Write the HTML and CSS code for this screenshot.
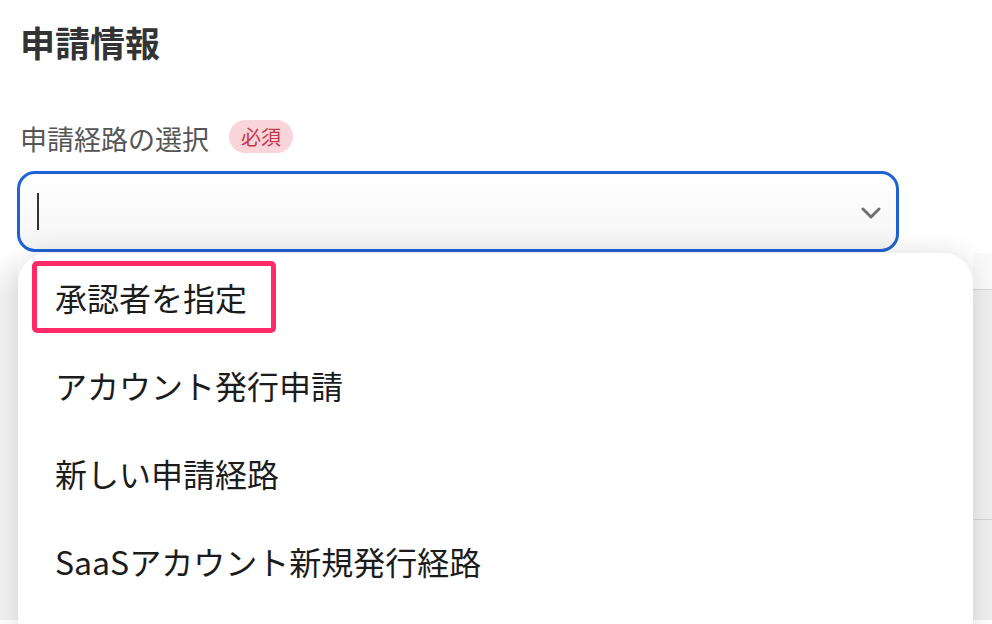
FILE: index.html
```html
<!DOCTYPE html>
<html lang="ja">
<head>
<meta charset="utf-8">
<link rel="stylesheet" href="styles.css">
</head>
<body>
<div class="page">
  <h1 class="title">申請情報</h1>
  <div class="field-label"><span>申請経路の選択</span><span class="badge">必須</span></div>
  <div class="select">
    <span class="caret"></span>
    <svg class="chevron" width="20" height="12" viewBox="0 0 20 12"><path d="M2 2 L10 10 L18 2" fill="none" stroke="#707070" stroke-width="3" stroke-linecap="round" stroke-linejoin="round"/></svg>
  </div>
  <div class="backdrop">
    <div class="bg-left"></div>
    <div class="bg-right">
      <div class="bg-row first"></div>
      <div class="bg-row second"></div>
      <div class="bg-row rest"></div>
    </div>
    <ul class="menu">
      <li class="item"><span class="mark">承認者を指定</span></li>
      <li class="item"><span>アカウント発行申請</span></li>
      <li class="item"><span>新しい申請経路</span></li>
      <li class="item"><span>SaaSアカウント新規発行経路</span></li>
    </ul>
  </div>
</div>
</body>
</html>
```

FILE: styles.css
```css
* { box-sizing: border-box; }
html, body { margin: 0; padding: 0; background: #fff; }
body {
  width: 992px;
  height: 624px;
  overflow: hidden;
  font-family: "Noto Sans CJK JP", "Noto Sans", sans-serif;
}
.page { display: flex; flex-direction: column; }
.title {
  margin: 0;
  padding: 20px 0 0 20px;
  font-size: 35px;
  line-height: 44px;
  font-weight: 700;
  color: #333;
}
.field-label {
  margin-top: 54px;
  padding-left: 20px;
  display: flex;
  align-items: center;
  height: 40px;
  font-size: 27px;
  color: #555;
}
.badge {
  margin-left: 20px;
  height: 33px;
  padding: 0 12px;
  border-radius: 17px;
  background: #f9d4d9;
  color: #c2384e;
  font-size: 20px;
  line-height: 33px;
  margin-top: -3px;
}
.select {
  margin: 13px 0 0 17px;
  width: 882px;
  height: 81px;
  border: 3px solid #1f62d4;
  border-radius: 18px;
  background: linear-gradient(#fff, #f5f5f5);
  display: flex;
  align-items: center;
  justify-content: space-between;
  padding: 0 15px 0 17px;
}
.caret {
  width: 2px;
  height: 37px;
  background: #333;
}
.chevron { margin-top: 2px; }
.backdrop {
  position: relative;
  height: 367px;
  margin-top: 1px;
  display: flex;
  justify-content: space-between;
}
.bg-left {
  width: 18px;
  background: linear-gradient(to bottom, #fff 0, #f1f1f1 40px);
}
.bg-right {
  width: 19px;
  display: flex;
  flex-direction: column;
}
.bg-row { border-bottom: 1px solid #d6d6d6; background: #efefef; }
.bg-row.first { height: 37px; background: #fafafa; }
.bg-row.second { height: 230px; }
.bg-row.rest { flex: 1; border-bottom: none; }
.menu {
  position: absolute;
  left: 18px;
  top: 0;
  width: 955px;
  height: 400px;
  margin: 0;
  padding: 0;
  list-style: none;
  background: #fff;
  border-radius: 30px 30px 0 0;
  box-shadow: 0 0 26px rgba(0, 0, 0, 0.13);
}
.item {
  height: 88px;
  display: flex;
  align-items: center;
  padding-left: 37px;
  font-size: 32px;
  line-height: 40px;
  color: #1c1c1c;
}
.mark { position: relative; }
.mark::after {
  content: "";
  position: absolute;
  left: -23px;
  right: -29px;
  top: -16px;
  bottom: -16px;
  border: 5px solid #ff2a68;
  border-radius: 5px;
}
```
